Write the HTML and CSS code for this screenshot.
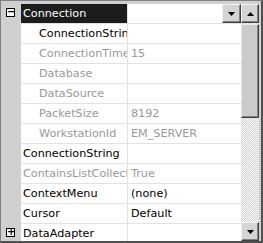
FILE: index.html
```html
<!DOCTYPE html>
<html lang="en">
<head>
    <meta charset="UTF-8">
    <title>Properties</title>
    <link rel="stylesheet" href="styles.css">
</head>
<body>

    <div class="grid">
        <div class="rows">
            <div class="row selected">
                <div class="margin"><span class="box">&minus;</span></div>
                <div class="name">Connection</div>
                <div class="value">
                    <span class="drop">
                        <svg width="7" height="4" viewBox="0 0 7 4"><polygon points="0,0 7,0 3.5,4" fill="#000"/></svg>
                    </span>
                </div>
            </div>
            <div class="row child">
                <div class="margin"></div>
                <div class="name">ConnectionString</div>
                <div class="value"></div>
            </div>
            <div class="row child readonly">
                <div class="margin"></div>
                <div class="name">ConnectionTimeout</div>
                <div class="value">15</div>
            </div>
            <div class="row child readonly">
                <div class="margin"></div>
                <div class="name">Database</div>
                <div class="value"></div>
            </div>
            <div class="row child readonly">
                <div class="margin"></div>
                <div class="name">DataSource</div>
                <div class="value"></div>
            </div>
            <div class="row child readonly">
                <div class="margin"></div>
                <div class="name">PacketSize</div>
                <div class="value">8192</div>
            </div>
            <div class="row child readonly">
                <div class="margin"></div>
                <div class="name">WorkstationId</div>
                <div class="value">EM_SERVER</div>
            </div>
            <div class="row">
                <div class="margin"></div>
                <div class="name">ConnectionString</div>
                <div class="value"></div>
            </div>
            <div class="row readonly">
                <div class="margin"></div>
                <div class="name">ContainsListCollection</div>
                <div class="value">True</div>
            </div>
            <div class="row">
                <div class="margin"></div>
                <div class="name">ContextMenu</div>
                <div class="value">(none)</div>
            </div>
            <div class="row">
                <div class="margin"></div>
                <div class="name">Cursor</div>
                <div class="value">Default</div>
            </div>
            <div class="row">
                <div class="margin"><span class="box">+</span></div>
                <div class="name">DataAdapter</div>
                <div class="value"></div>
            </div>
        </div>

        <div class="scrollbar">
            <div class="sb-btn">
                <svg width="7" height="4" viewBox="0 0 7 4"><polygon points="3.5,0 7,4 0,4" fill="#000"/></svg>
            </div>
            <div class="sb-track">
                <div class="sb-thumb"></div>
            </div>
            <div class="sb-btn">
                <svg width="7" height="4" viewBox="0 0 7 4"><polygon points="0,0 7,0 3.5,4" fill="#000"/></svg>
            </div>
        </div>
    </div>

</body>
</html>
```

FILE: styles.css
```css
body {
    margin: 0;
    font-family: "DejaVu Sans", Tahoma, sans-serif;
    font-size: 11.2px;
    color: #000;
}
.grid {
    width: 263px;
    height: 243px;
    box-sizing: border-box;
    border: 1px solid #808080;
    border-right: 2px solid #505050;
    border-bottom: 2px solid #505050;
    padding: 3px 2px 0 0;
    background-color: #d0d0d0;
    display: flex;
    overflow: hidden;
}
.rows {
    flex: 1;
    display: flex;
    flex-direction: column;
    background-color: #fff;
}
.row {
    display: grid;
    grid-template-columns: 20px 107px 1fr;
    height: 20px;
    flex: none;
}
.margin {
    background-color: #d0d0d0;
    position: relative;
}
.box {
    position: absolute;
    left: 5px;
    top: 4px;
    width: 7px;
    height: 7px;
    border: 1px solid #000;
    background-color: #fff;
    font-size: 10px;
    line-height: 6px;
    text-align: center;
    font-weight: bold;
}
.name, .value {
    border-bottom: 1px solid #e2e2e2;
    white-space: nowrap;
    overflow: hidden;
    line-height: 19px;
}
.name {
    border-right: 1px solid #e2e2e2;
    padding-left: 2px;
}
.value {
    padding-left: 3px;
    display: flex;
    justify-content: flex-end;
}
.value {
    justify-content: flex-start;
}
.child .name {
    padding-left: 18px;
}
.readonly .name, .readonly .value {
    color: #999;
}
.selected .name {
    background-color: #1c1c1c;
    color: #fff;
}
.selected .value {
    justify-content: flex-end;
    padding: 0;
}
.drop, .sb-btn {
    box-sizing: border-box;
    display: flex;
    align-items: center;
    justify-content: center;
    background-color: #d4d4d4;
    border: 1px solid;
    border-color: #f4f4f4 #404040 #404040 #f4f4f4;
    box-shadow: inset -1px -1px 0 #808080;
}
.drop {
    width: 19px;
    height: 19px;
}
.scrollbar {
    width: 18px;
    display: flex;
    flex-direction: column;
}
.sb-btn {
    height: 19px;
    flex: none;
}
.sb-track {
    flex: 1;
    background: repeating-conic-gradient(#cfcfcf 0 25%, #fff 0 50%) 0 0 / 2px 2px;
    padding-top: 1px;
}
.sb-thumb {
    height: 94px;
    box-sizing: border-box;
    background-color: #cbcbcb;
    border: 1px solid;
    border-color: #e8e8e8 #404040 #404040 #e8e8e8;
    box-shadow: inset -1px -1px 0 #808080;
}
```
